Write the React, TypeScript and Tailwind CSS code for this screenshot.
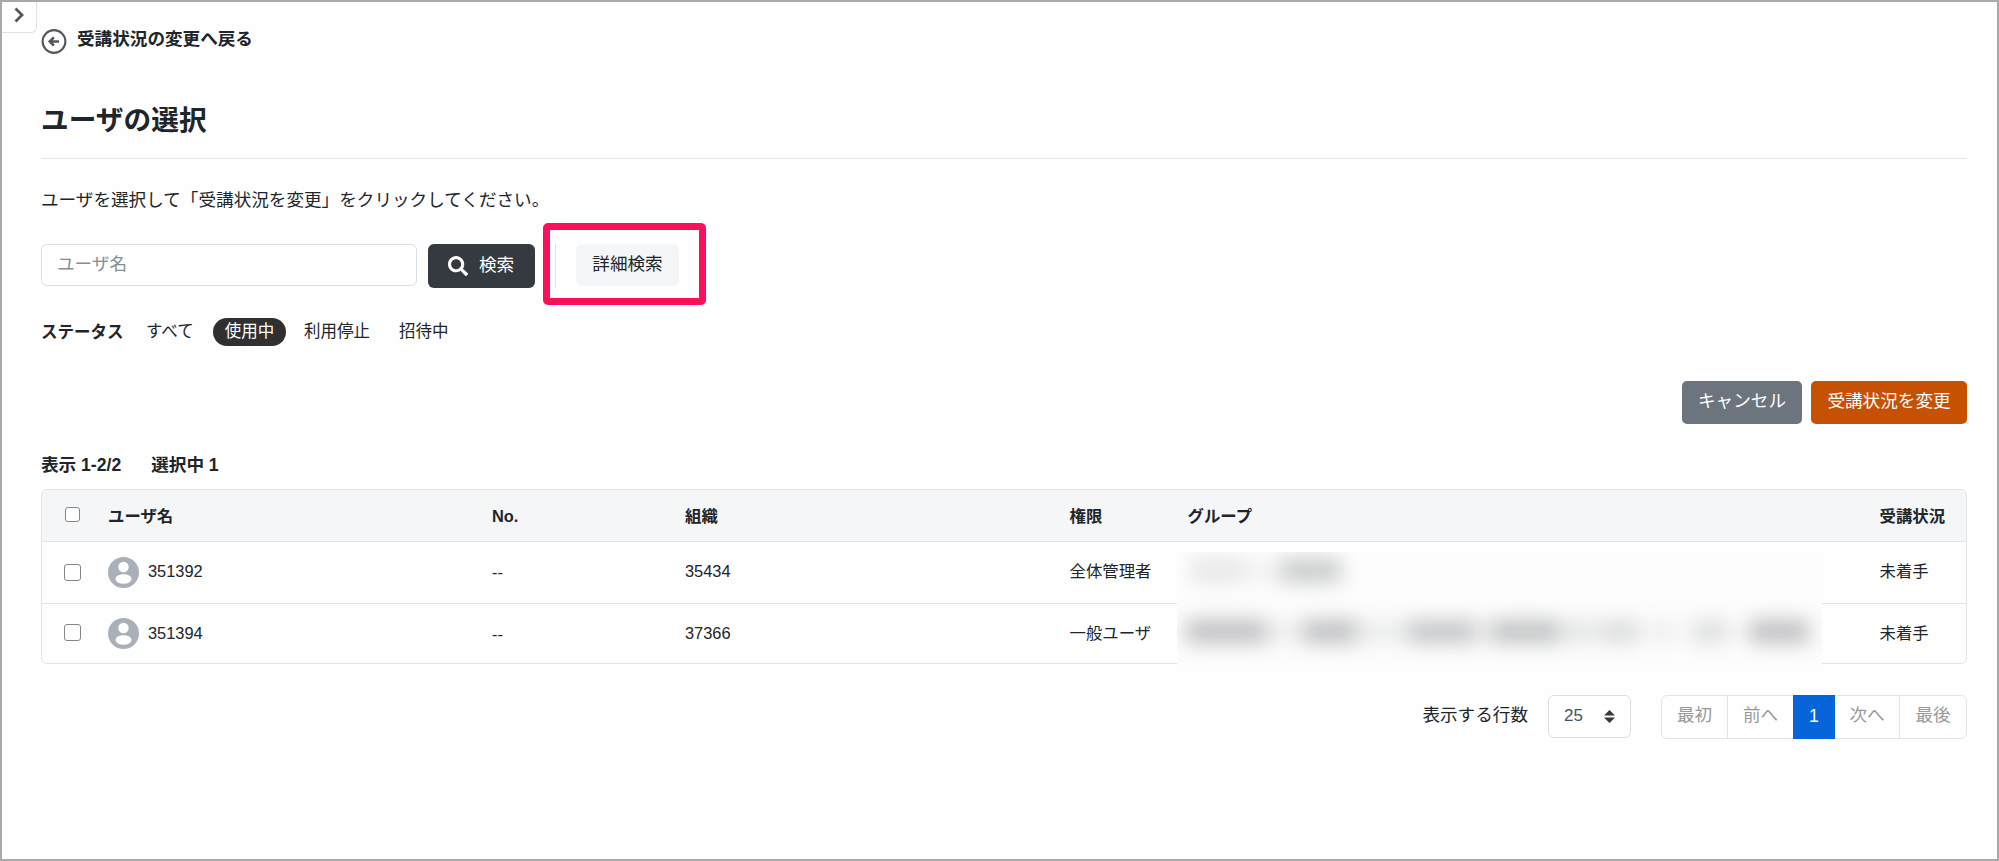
import { FaSearch } from 'react-icons/fa';

interface User {
  name: string;
  no: string;
  organization: string;
  role: string;
  status: string;
}

interface Smudge {
  left: number;
  width: number;
  opacity: number;
}

const USERS: User[] = [
  { name: '351392', no: '--', organization: '35434', role: '全体管理者', status: '未着手' },
  { name: '351394', no: '--', organization: '37366', role: '一般ユーザ', status: '未着手' },
];

// Redacted group names, one list per row
const SMUDGES: Smudge[][] = [
  [
    { left: 14, width: 52, opacity: 0.34 },
    { left: 66, width: 38, opacity: 0.14 },
    { left: 104, width: 60, opacity: 0.8 },
  ],
  [
    { left: 9, width: 80, opacity: 0.95 },
    { left: 89, width: 38, opacity: 0.2 },
    { left: 127, width: 52, opacity: 0.95 },
    { left: 179, width: 53, opacity: 0.25 },
    { left: 232, width: 66, opacity: 0.85 },
    { left: 298, width: 16, opacity: 0.2 },
    { left: 314, width: 70, opacity: 0.9 },
    { left: 390, width: 26, opacity: 0.4 },
    { left: 422, width: 40, opacity: 0.5 },
    { left: 474, width: 22, opacity: 0.25 },
    { left: 514, width: 38, opacity: 0.45 },
    { left: 572, width: 60, opacity: 0.95 },
  ],
];

const COLUMNS =
  'grid grid-cols-[66px_384px_193px_384.5px_118px_692px_1fr] items-center';

function BackIcon() {
  return (
    <svg width="26" height="26" viewBox="0 0 26 26" fill="none" stroke="#54585d">
      <circle cx="13" cy="12.500" r="11.400" strokeWidth="2.100" />
      <path d="M18 12.500H9.500M12.900 8.300L8.700 12.500l4.200 4.200" strokeWidth="2.600" />
    </svg>
  );
}

function Avatar() {
  return (
    <svg width="31" height="31" viewBox="0 0 31 31">
      <circle cx="15.500" cy="15.500" r="15.500" fill="#a9b0b9" />
      <circle cx="15.500" cy="10" r="5.200" fill="#fff" />
      <ellipse cx="15.500" cy="22" rx="8" ry="4.800" fill="#fff" />
    </svg>
  );
}

function Checkbox({ small = false }: { small?: boolean }) {
  return (
    <input
      type="checkbox"
      className={
        small
          ? 'block size-[15px] appearance-none rounded-[3px] border-[1.5px] border-[#868686] bg-white'
          : 'block size-[17px] appearance-none rounded-[3px] border-[1.5px] border-[#868686] bg-white'
      }
    />
  );
}

function SortArrows() {
  return (
    <svg width="11" height="13" viewBox="0 0 10 13" preserveAspectRatio="none" fill="#343a40">
      <path d="M5 0l5 5.400H0zM5 13l5-5.400H0z" />
    </svg>
  );
}

export default function App() {
  return (
    <div className="relative h-[861px] w-[1999px] overflow-hidden border-2 border-[#a9a9a9] bg-[#fefefe] font-['Liberation_Sans','Noto_Sans_CJK_JP',sans-serif] text-[17.6px] leading-6 text-[#212529]">
      {/* Sidebar toggle */}
      <button className="absolute top-0 left-0 flex h-[31px] w-[35px] items-center justify-center rounded-br-md border-r border-b border-[#dee2e6] bg-white pb-[5px]">
        <svg width="10" height="16" viewBox="0 0 10 16" fill="none" stroke="#54585d" strokeWidth="2.8">
          <path d="M1.500 1.500L8 8l-6.500 6.500" />
        </svg>
      </button>

      <main className="pr-[30px] pl-[39px]">
        <a className="flex h-[53px] items-end gap-[10px]">
          <BackIcon />
          <span className="mb-1 font-bold">受講状況の変更へ戻る</span>
        </a>

        <h1 className="mt-[43px] h-[61px] border-b border-[#e4e6e8] pt-px text-[27.7px] leading-[44px] font-bold">
          ユーザの選択
        </h1>

        <p className="mt-[29px]">ユーザを選択して「受講状況を変更」をクリックしてください。</p>

        {/* Search */}
        <div className="mt-8 flex h-11 items-start">
          <input
            placeholder="ユーザ名"
            className="h-[42px] w-[376px] rounded-md border border-[#d9dee3] bg-white px-[15px] pb-0.5 placeholder:text-[#868d94]"
          />
          <button className="ml-[11px] flex h-11 w-[107px] items-center rounded-md bg-[#343a40] pl-5 text-white">
            <FaSearch size={20} />
            <span className="mb-0.5 ml-[11px]">検索</span>
          </button>
          <div className="relative ml-5 flex h-11 border-l border-[#dee2e6] pl-5">
            <button className="h-[42px] w-[103px] rounded-md bg-[#f5f6f8] pb-[3px] text-[#212529]">詳細検索</button>
            <div className="absolute -top-[21px] -left-[13px] h-[82px] w-[163px] rounded-[5px] border-[7.5px] border-[#ff0e5a]" />
          </div>
        </div>

        {/* Status filter */}
        <div className="mt-[30px] flex h-7 items-center text-[16.5px]">
          <span className="mb-px w-[105px] font-bold">ステータス</span>
          <span className="mb-0.5 w-[67px]">すべて</span>
          <span className="h-7 w-[73px] rounded-full bg-[#303030] text-center leading-[26px] text-white">使用中</span>
          <span className="mb-0.5 ml-[18px] w-[95px]">利用停止</span>
          <span className="mb-0.5">招待中</span>
        </div>

        <div className="mt-[35px] flex justify-end gap-[9px] text-white">
          <button className="h-[43px] w-[120px] rounded-[5px] bg-[#6c757d] pb-1">キャンセル</button>
          <button className="h-[43px] w-[156px] rounded-[5px] bg-[#c65102] pb-1">受講状況を変更</button>
        </div>

        <div className="mt-[29px] flex gap-[30px] text-[17.6px] font-bold">
          <span>表示 1-2/2</span>
          <span>選択中 1</span>
        </div>

        {/* User table */}
        <div className="relative mt-3 h-[175px] rounded-md border border-[#e2e4e7] text-[16.4px]">
          <div className={`${COLUMNS} h-[52px] rounded-t-md border-b border-[#e2e4e7] bg-[#f5f6f8] font-bold`}>
            <span className="-mt-[3px] pl-[23px]"><Checkbox small /></span>
            <span className="pt-px">ユーザ名</span>
            <span className="pt-px">No.</span>
            <span className="pt-px">組織</span>
            <span className="pt-px">権限</span>
            <span className="pt-px">グループ</span>
            <span className="pt-px">受講状況</span>
          </div>
          {USERS.map((user, index) => (
            <div key={user.name} className={`${COLUMNS} ${index === 0 ? 'h-[62px] border-b border-[#e2e4e7] pb-px' : 'h-[59px]'}`}>
              <span className={index === 0 ? 'pt-px pl-[22px]' : 'pb-[3px] pl-[22px]'}><Checkbox /></span>
              <span className="flex items-center gap-[9px]">
                <Avatar />
                <span className="pb-0.5">{user.name}</span>
              </span>
              <span>{user.no}</span>
              <span className="pb-0.5">{user.organization}</span>
              <span className="pb-0.5">{user.role}</span>
              <span />
              <span className="pb-0.5">{user.status}</span>
            </div>
          ))}
          <div className="absolute top-[62px] left-[1135px] flex h-[113px] w-[645px] flex-col overflow-hidden bg-[#fdfdfd]">
            {SMUDGES.map((row, index) => (
              <div key={index} className="relative h-[61px] shrink-0 blur-[10px]">
                {row.map((item) => (
                  <div
                    key={item.left}
                    className="absolute top-[7px] h-[23px] bg-[#b9bbbd]"
                    style={{ left: item.left, width: item.width, opacity: item.opacity }}
                  />
                ))}
              </div>
            ))}
          </div>
        </div>

        {/* Pagination */}
        <div className="mt-[31px] flex items-start justify-end">
          <span className="mt-2">表示する行数</span>
          <button className="ml-5 flex h-[43px] w-[83px] items-center justify-between rounded-md border border-[#d9dee3] bg-white px-[15px] text-[#495057]">
            <span className="pb-px text-[17px]">25</span>
            <SortArrows />
          </button>
          <div className="ml-[30px] flex h-11 w-[306px] rounded-md border border-[#e2e5e8] text-center leading-[39px] text-[#999]">
            <span className="w-[66px] border-r border-[#dee2e6]">最初</span>
            <span className="w-[65px]">前へ</span>
            <span className="-my-px h-11 w-[42px] bg-[#0565d9] leading-[43px] text-white">1</span>
            <span className="w-[65px] border-r border-[#dee2e6]">次へ</span>
            <span className="flex-1">最後</span>
          </div>
        </div>
      </main>
    </div>
  );
}
